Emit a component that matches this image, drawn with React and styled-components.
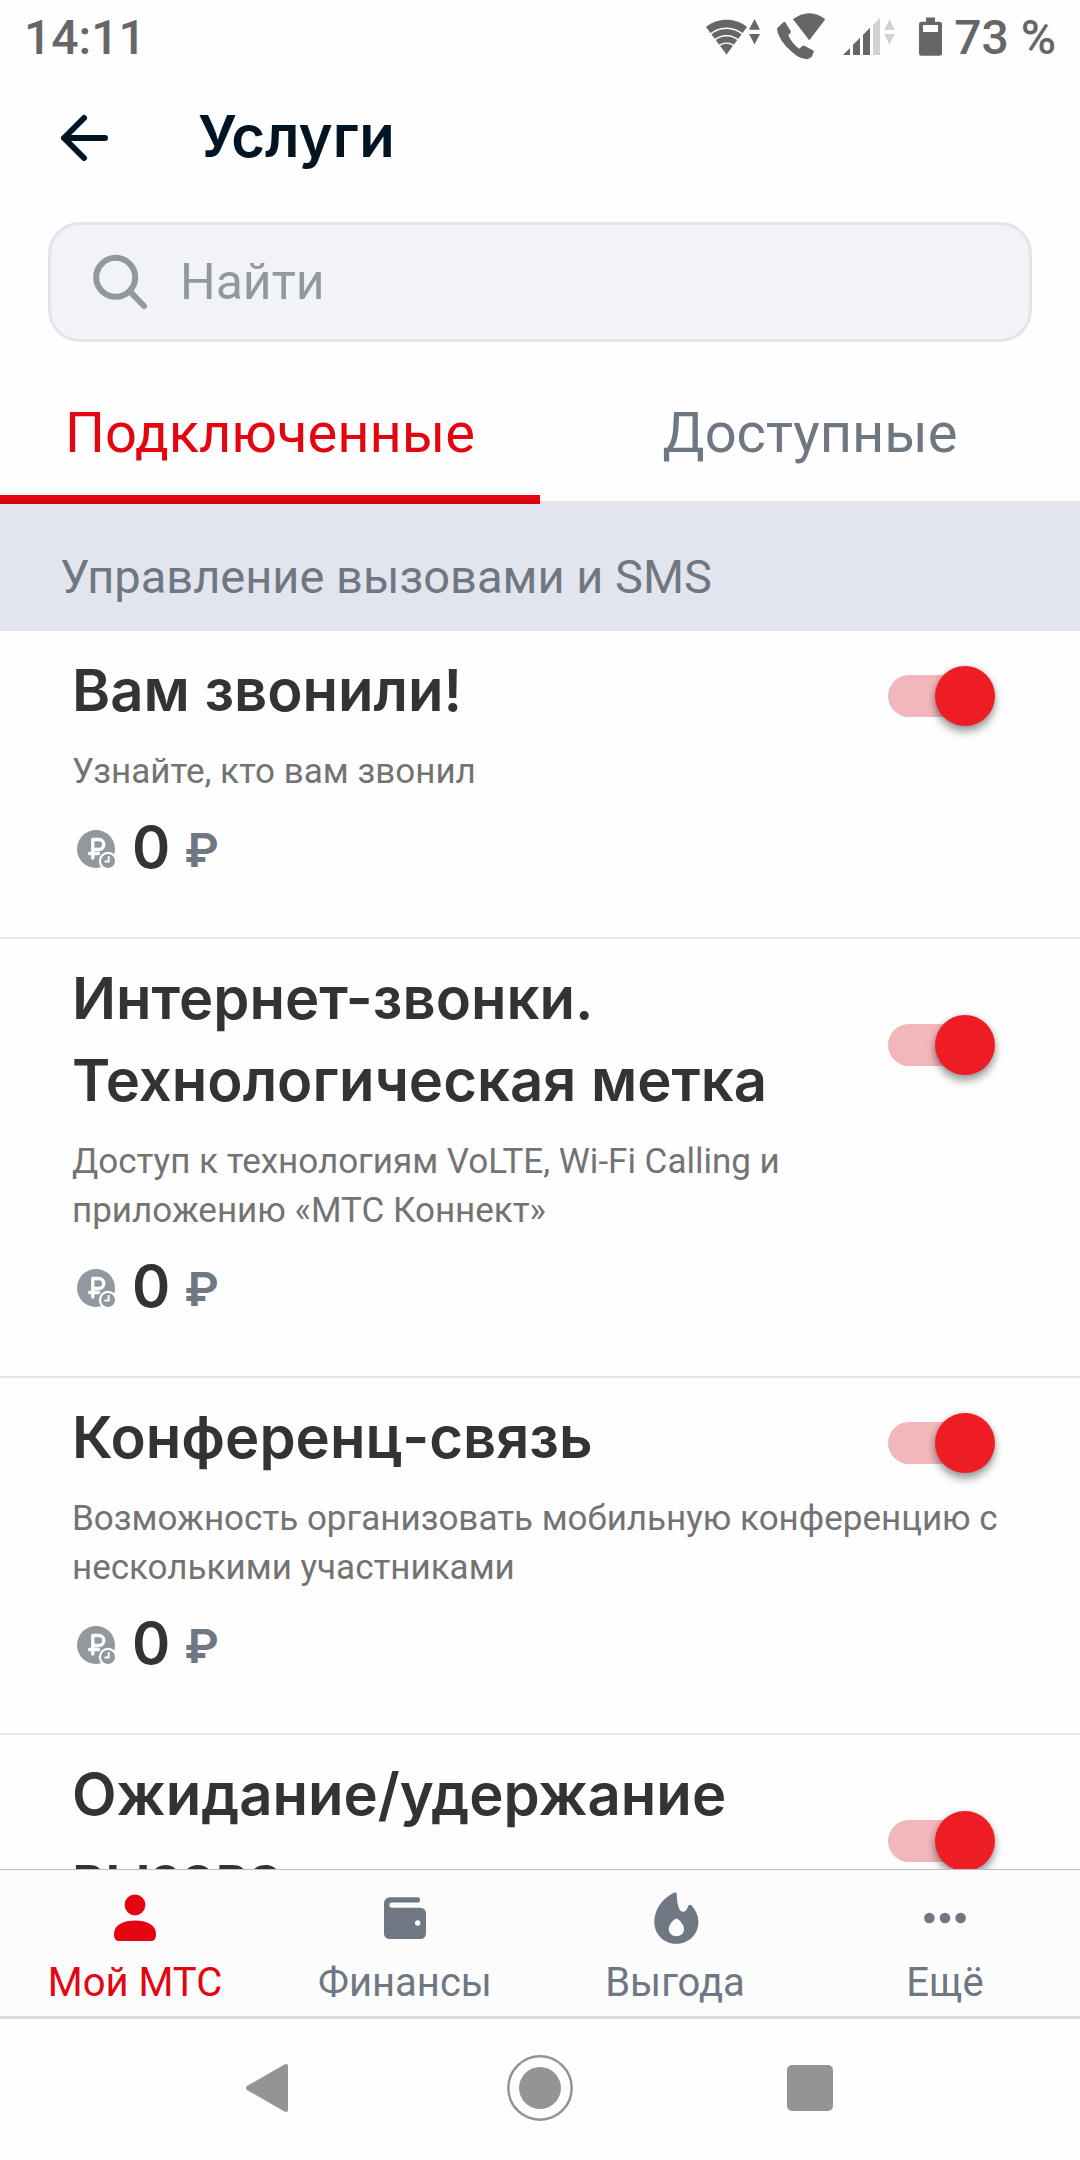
import React, { useState } from 'react'
import styled, { createGlobalStyle, ThemeProvider } from 'styled-components'

const theme = {
    fonts: {
        main: "Roboto, 'Noto Sans', sans-serif",
        heading: "Inter, Roboto, 'Noto Sans', sans-serif",
    },
    colors: {
        red: '#e30611',
        navy: '#001424',
        text: '#333333',
        muted: '#737373',
        slate: '#6e7782',
        grey: '#9198a0',
        line: '#e2e5e9',
        section: '#e2e5ed',
        field: '#f2f3f7',
        status: '#666666',
        statusOff: '#d1d1d1',
    },
}

const GlobalStyle = createGlobalStyle`
    * {
        box-sizing: border-box;
    }
    body {
        margin: 0;
        background: #fefefe;
        font-family: ${props => props.theme.fonts.main};
    }
    h1, h2, h3, p {
        margin: 0;
        padding: 0;
    }
    button {
        border: 0;
        padding: 0;
        background: none;
        font-family: inherit;
        cursor: pointer;
    }
    svg {
        display: block;
        flex-shrink: 0;
    }
`;

const Screen = styled.div`
    display: flex;
    flex-direction: column;
    height: 100vh;
`;

const StatusBar = styled.div`
    display: flex;
    align-items: center;
    justify-content: space-between;
    flex-shrink: 0;
    height: 74px;
    padding: 0 24px;
    font-size: 48px;
    font-weight: 500;
    color: ${props => props.theme.colors.status};
`;

const StatusIcons = styled.div`
    display: flex;
    align-items: center;
    gap: 14px;
`;

const Battery = styled.div`
    display: flex;
    align-items: center;
    gap: 12px;
    margin-left: 10px;
`;

const Header = styled.header`
    display: flex;
    align-items: center;
    flex-shrink: 0;
    gap: 84px;
    height: 128px;
    padding: 0 54px;
`;

const Title = styled.h1`
    font-family: ${props => props.theme.fonts.heading};
    font-size: 58px;
    font-weight: 600;
    line-height: 72px;
    padding-bottom: 4px;
    color: ${props => props.theme.colors.navy};
`;

const Search = styled.label`
    display: flex;
    align-items: center;
    flex-shrink: 0;
    gap: 30px;
    height: 120px;
    margin: 20px 48px 0;
    padding: 0 39px;
    border: 3px solid ${props => props.theme.colors.section};
    border-radius: 32px;
    background: ${props => props.theme.colors.field};
`;

const SearchInput = styled.input`
    flex: 1;
    min-width: 0;
    padding: 0;
    border: 0;
    outline: 0;
    background: transparent;
    font-family: inherit;
    font-size: 50px;
    color: ${props => props.theme.colors.navy};
    &::placeholder {
        color: ${props => props.theme.colors.grey};
        opacity: 1;
    }
`;

const Tabs = styled.div`
    display: flex;
    flex-shrink: 0;
    margin-top: 24px;
`;

const Tab = styled.button`
    flex: 1;
    height: 138px;
    padding-bottom: 4px;
    font-size: 56px;
    color: ${props => props.$active ? props.theme.colors.red : props.theme.colors.slate};
    box-shadow: ${props => props.$active
        ? 'inset 0 -3px #cc050f, inset 0 -9px #e30611'
        : 'inset 0 -3px #e5e5e5'};
`;

const List = styled.main`
    flex: 1;
    min-height: 0;
    overflow-y: auto;
    scrollbar-width: none;
`;

const SectionTitle = styled.h2`
    padding: 46px 60px 27px;
    font-size: 47px;
    font-weight: 400;
    line-height: 54px;
    color: ${props => props.theme.colors.slate};
    background: ${props => props.theme.colors.section};
`;

const Service = styled.section`
    padding: 18px 80px 55px 72px;
    border-bottom: 2px solid ${props => props.theme.colors.line};
`;

const ServiceHead = styled.div`
    display: flex;
    align-items: center;
    justify-content: space-between;
    gap: 48px;
    padding-right: 5px;
`;

const ServiceName = styled.h3`
    font-family: ${props => props.theme.fonts.heading};
    font-size: 58px;
    font-weight: 600;
    line-height: 82px;
    color: ${props => props.theme.colors.text};
`;

const ServiceText = styled.p`
    margin-top: 16px;
    font-size: 35px;
    line-height: 49px;
    color: ${props => props.theme.colors.muted};
`;

const Price = styled.p`
    display: flex;
    align-items: center;
    margin-top: 16px;
    padding-left: 5px;
    font-family: ${props => props.theme.fonts.heading};
    font-size: 58px;
    font-weight: 600;
    line-height: 70px;
    color: ${props => props.theme.colors.text};
`;

const Amount = styled.span`
    margin: 0 15px 0 14px;
`;

const Currency = styled.span`
    padding-top: 8px;
    font-family: ${props => props.theme.fonts.main};
    font-size: 48px;
    line-height: 62px;
    color: ${props => props.theme.colors.slate};
`;

const Switch = styled.input`
    appearance: none;
    position: relative;
    flex-shrink: 0;
    width: 107px;
    height: 60px;
    margin: 12px 0 0;
    cursor: pointer;
    &::before {
        content: '';
        position: absolute;
        top: 9px;
        left: 0;
        width: 100px;
        height: 42px;
        border-radius: 21px;
        background: ${props => props.checked ? '#f2b7ba' : '#c4c8cf'};
    }
    &::after {
        content: '';
        position: absolute;
        top: 0;
        left: ${props => props.checked ? '47px' : '0'};
        width: 60px;
        height: 60px;
        border-radius: 50%;
        background: ${props => props.checked ? '#ee1d23' : '#ffffff'};
        box-shadow: 0 6px 9px rgba(0, 0, 0, 0.36), 0 0 6px rgba(0, 0, 0, 0.14);
    }
`;

const TabBar = styled.nav`
    display: flex;
    flex-shrink: 0;
    border-top: 1px solid #bdbdbd;
    border-bottom: 3px solid #dbdbdb;
    background: #fcfcfc;
`;

const TabBarLink = styled.a`
    display: flex;
    flex: 1;
    flex-direction: column;
    align-items: center;
    gap: 14px;
    padding: 21px 0 9px;
    font-size: 40px;
    line-height: 48px;
    text-decoration: none;
    color: ${props => props.$active ? props.theme.colors.red : props.theme.colors.slate};
`;

const SystemBar = styled.div`
    display: flex;
    flex-shrink: 0;
    height: 141px;
    padding: 0 135px;
    color: #949494;
`;

const SystemButton = styled.button`
    display: flex;
    flex: 1;
    align-items: center;
    justify-content: center;
    padding-bottom: 4px;
    color: inherit;
`;

const WifiIcon = () => (
    <svg width="56" height="44" viewBox="0 0 56 44" fill="currentColor">
        <path d="M1 12C13 2.3 30 2.3 42 12L21.5 39.5z" />
        <g fill="none" stroke="#fefefe" strokeWidth="1.6">
            <path d="M4 20.5c10-9.6 25-9.6 35 0" />
            <path d="M8 26.5c8-7.6 19-7.6 27 0" />
            <path d="M12 32.2c6-5.3 13-5.3 19 0" />
        </g>
        <path d="M49.6 4l5.4 10.8H44zM44 19h11l-5.4 10.4z" />
    </svg>
)

const CallIcon = () => (
    <svg width="52" height="52" viewBox="0 0 52 52" fill="currentColor">
        <path d="M18 8.3C28 .3 40.5 .3 50.3 8.3L34.3 29.3z" />
        <path d="M2 17.3L9 10.7q1 0 1.5 1L15.7 20q.4 1-.4 2l-2 2.3c2.5 5.7 6 10 11 13.4l3-2.6q1-.8 2-.3l8.6 4.5q1 .7.7 1.7l-1.3 4q-2.3 3-5.3 3.3-5.5-.3-10-3.3Q9 35.5 4.3 25.5 2 21 2 17.3z" />
    </svg>
)

const SignalIcon = () => (
    <svg width="54" height="44" viewBox="0 0 54 44" fill="currentColor">
        <path d="M2 40l7-7v7zM12 29.7l7-7V40h-7zM22 19.7l7-7V40h-7z" />
        <path fill={theme.colors.statusOff} d="M32 10l7-7v37h-7zM48.5 4.3L53.8 15H43.2zM43.2 19h10.6l-5.3 10.5z" />
    </svg>
)

const BatteryIcon = () => (
    <svg width="23" height="40" viewBox="0 0 23 40" fill="currentColor">
        <path fillRule="evenodd" d="M7 .5h9v4.2h4.5A2.5 2.5 0 0 1 23 7.2v29a2.5 2.5 0 0 1-2.5 2.5h-18A2.5 2.5 0 0 1 0 36.2v-29a2.5 2.5 0 0 1 2.5-2.5H7zM4 8v7h15V8z" />
    </svg>
)

const BackIcon = () => (
    <svg width="60" height="60" viewBox="0 0 60 60" fill="none" stroke={theme.colors.navy} strokeWidth="6" strokeLinecap="round" strokeLinejoin="round">
        <path d="M51 30H10M30 10L10 30l20 20" />
    </svg>
)

const SearchIcon = () => (
    <svg width="60" height="60" viewBox="0 0 60 60" fill="none" stroke={theme.colors.grey} strokeWidth="6" strokeLinecap="round">
        <circle cx="25.7" cy="25.3" r="19.5" />
        <path d="M40 39.5L54 54" />
    </svg>
)

const CoinIcon = () => (
    <svg width="41" height="45" viewBox="0 -4 41 45">
        <circle cx="19" cy="20" r="19" fill={theme.colors.grey} />
        <path d="M15.8 29V10.5h6a5 5 0 0 1 0 10h-6M12.5 24.5h9" fill="none" stroke="#fefefe" strokeWidth="3.4" strokeLinecap="round" strokeLinejoin="round" />
        <circle cx="31" cy="32" r="9.2" fill="#fefefe" />
        <circle cx="31" cy="32" r="7" fill={theme.colors.grey} />
        <path d="M31.7 28v4.5h-3.5" fill="none" stroke="#fefefe" strokeWidth="2" strokeLinecap="round" />
    </svg>
)

const UserIcon = () => (
    <svg width="54" height="54" viewBox="0 0 54 54" fill="currentColor">
        <circle cx="27" cy="13.8" r="10.4" />
        <path d="M6 43c0-9 9-13.5 21-13.5S48 34 48 43c0 4.500-1.500 7-5 7H11c-3.500 0-5-2.500-5-7z" />
    </svg>
)

const WalletIcon = () => (
    <svg width="54" height="54" viewBox="0 0 54 54" fill="currentColor">
        <path fillRule="evenodd" d="M12 6.3h27.500a2.600 2.600 0 0 1 0 5.200H14a2.600 2.600 0 0 0 0 5.200h28.500a5.500 5.500 0 0 1 5.500 5.500v20.300a5.500 5.500 0 0 1-5.500 5.500h-31A5.500 5.500 0 0 1 6 42.500V12.300a6 6 0 0 1 6-6zM39.700 29.300a2.700 2.700 0 1 0 0 5.400 2.700 2.700 0 0 0 0-5.400z" />
    </svg>
)

const FlameIcon = () => (
    <svg width="54" height="54" viewBox="0 0 54 54" fill="currentColor">
        <path fillRule="evenodd" d="M26 1.8c1.6-.8 2.6-.2 2.7 1.2.3 9.5 2 17.8 6.3 17.8 3 0 4-2.8 5-5.3.9-2.2 2.6-2.5 4-.7 4 5.2 6.4 10.2 6.4 16.2 0 13-10.4 21.8-22.1 21.8S6.3 44 6.3 31C6.3 18 15 7 26 1.8zM28.4 27.6c-2.4.9-7.6 5.4-7.6 10.4 0 4.5 3.2 7.2 7.6 7.2S36 42.5 36 38c0-5-5-9.5-7.6-10.4z" />
    </svg>
)

const DotsIcon = () => (
    <svg width="54" height="54" viewBox="0 0 54 54" fill="currentColor">
        <circle cx="11.4" cy="27" r="5.3" />
        <circle cx="27" cy="27" r="5.3" />
        <circle cx="42.6" cy="27" r="5.3" />
    </svg>
)

const services = [
    { id: 'missed', name: 'Вам звонили!', text: 'Узнайте, кто вам звонил', price: 0 },
    { id: 'volte', name: 'Интернет-звонки. Технологическая метка', text: 'Доступ к технологиям VoLTE, Wi-Fi Calling и приложению «МТС Коннект»', price: 0 },
    { id: 'conference', name: 'Конференц-связь', text: 'Возможность организовать мобильную конференцию с несколькими участниками', price: 0 },
    { id: 'waiting', name: 'Ожидание/удержание вызова' },
]

const links = [
    { label: 'Мой МТС', Icon: UserIcon },
    { label: 'Финансы', Icon: WalletIcon },
    { label: 'Выгода', Icon: FlameIcon },
    { label: 'Ещё', Icon: DotsIcon },
]

const ServiceItem = ({ id, name, text, price }) => {
    const [enabled, setEnabled] = useState(true)

    return (
        <Service>
            <ServiceHead>
                <ServiceName id={id}>{name}</ServiceName>
                <Switch
                    type="checkbox"
                    role="switch"
                    aria-labelledby={id}
                    checked={enabled}
                    onChange={e => setEnabled(e.target.checked)}
                />
            </ServiceHead>
            {text && <ServiceText>{text}</ServiceText>}
            {price !== undefined && (
                <Price>
                    <CoinIcon />
                    <Amount>{price}</Amount>
                    <Currency>₽</Currency>
                </Price>
            )}
        </Service>
    )
}

const App = () => {
    const [tab, setTab] = useState('Подключенные')

    return (
        <ThemeProvider theme={theme}>
            <GlobalStyle />
            <Screen>
                <StatusBar>
                    <span>14:11</span>
                    <StatusIcons>
                        <WifiIcon />
                        <CallIcon />
                        <SignalIcon />
                        <Battery>
                            <BatteryIcon />
                            <span>73 %</span>
                        </Battery>
                    </StatusIcons>
                </StatusBar>
                <Header>
                    <button type="button" aria-label="Назад"><BackIcon /></button>
                    <Title>Услуги</Title>
                </Header>
                <Search>
                    <SearchIcon />
                    <SearchInput type="text" placeholder="Найти" aria-label="Найти" />
                </Search>
                <Tabs role="tablist">
                    {['Подключенные', 'Доступные'].map(name => (
                        <Tab
                            key={name}
                            type="button"
                            role="tab"
                            aria-selected={tab === name}
                            $active={tab === name}
                            onClick={() => setTab(name)}
                        >
                            {name}
                        </Tab>
                    ))}
                </Tabs>
                <List>
                    <SectionTitle>Управление вызовами и SMS</SectionTitle>
                    {services.map(item => <ServiceItem key={item.id} {...item} />)}
                </List>
                <TabBar>
                    {links.map(({ label, Icon }, i) => (
                        <TabBarLink key={label} href="#" $active={i === 0}>
                            <Icon />
                            {label}
                        </TabBarLink>
                    ))}
                </TabBar>
                <SystemBar>
                    <SystemButton type="button" aria-label="Назад">
                        <svg width="54" height="50" viewBox="0 0 54 50" fill="currentColor">
                            <path d="M41.5 1.5Q45 0 45 3.5v43q0 3.5-3.5 2L4 27q-2-2 0-4z" />
                        </svg>
                    </SystemButton>
                    <SystemButton type="button" aria-label="Домой">
                        <svg width="66" height="66" viewBox="0 0 66 66" fill="currentColor">
                            <circle cx="33" cy="33" r="31.7" fill="none" stroke="currentColor" strokeWidth="2.5" />
                            <circle cx="33" cy="33" r="21" />
                        </svg>
                    </SystemButton>
                    <SystemButton type="button" aria-label="Недавние">
                        <svg width="46" height="46" viewBox="0 0 46 46" fill="currentColor">
                            <rect x="0" y="0" width="46" height="46" rx="5" />
                        </svg>
                    </SystemButton>
                </SystemBar>
            </Screen>
        </ThemeProvider>
    )
}

export default App
